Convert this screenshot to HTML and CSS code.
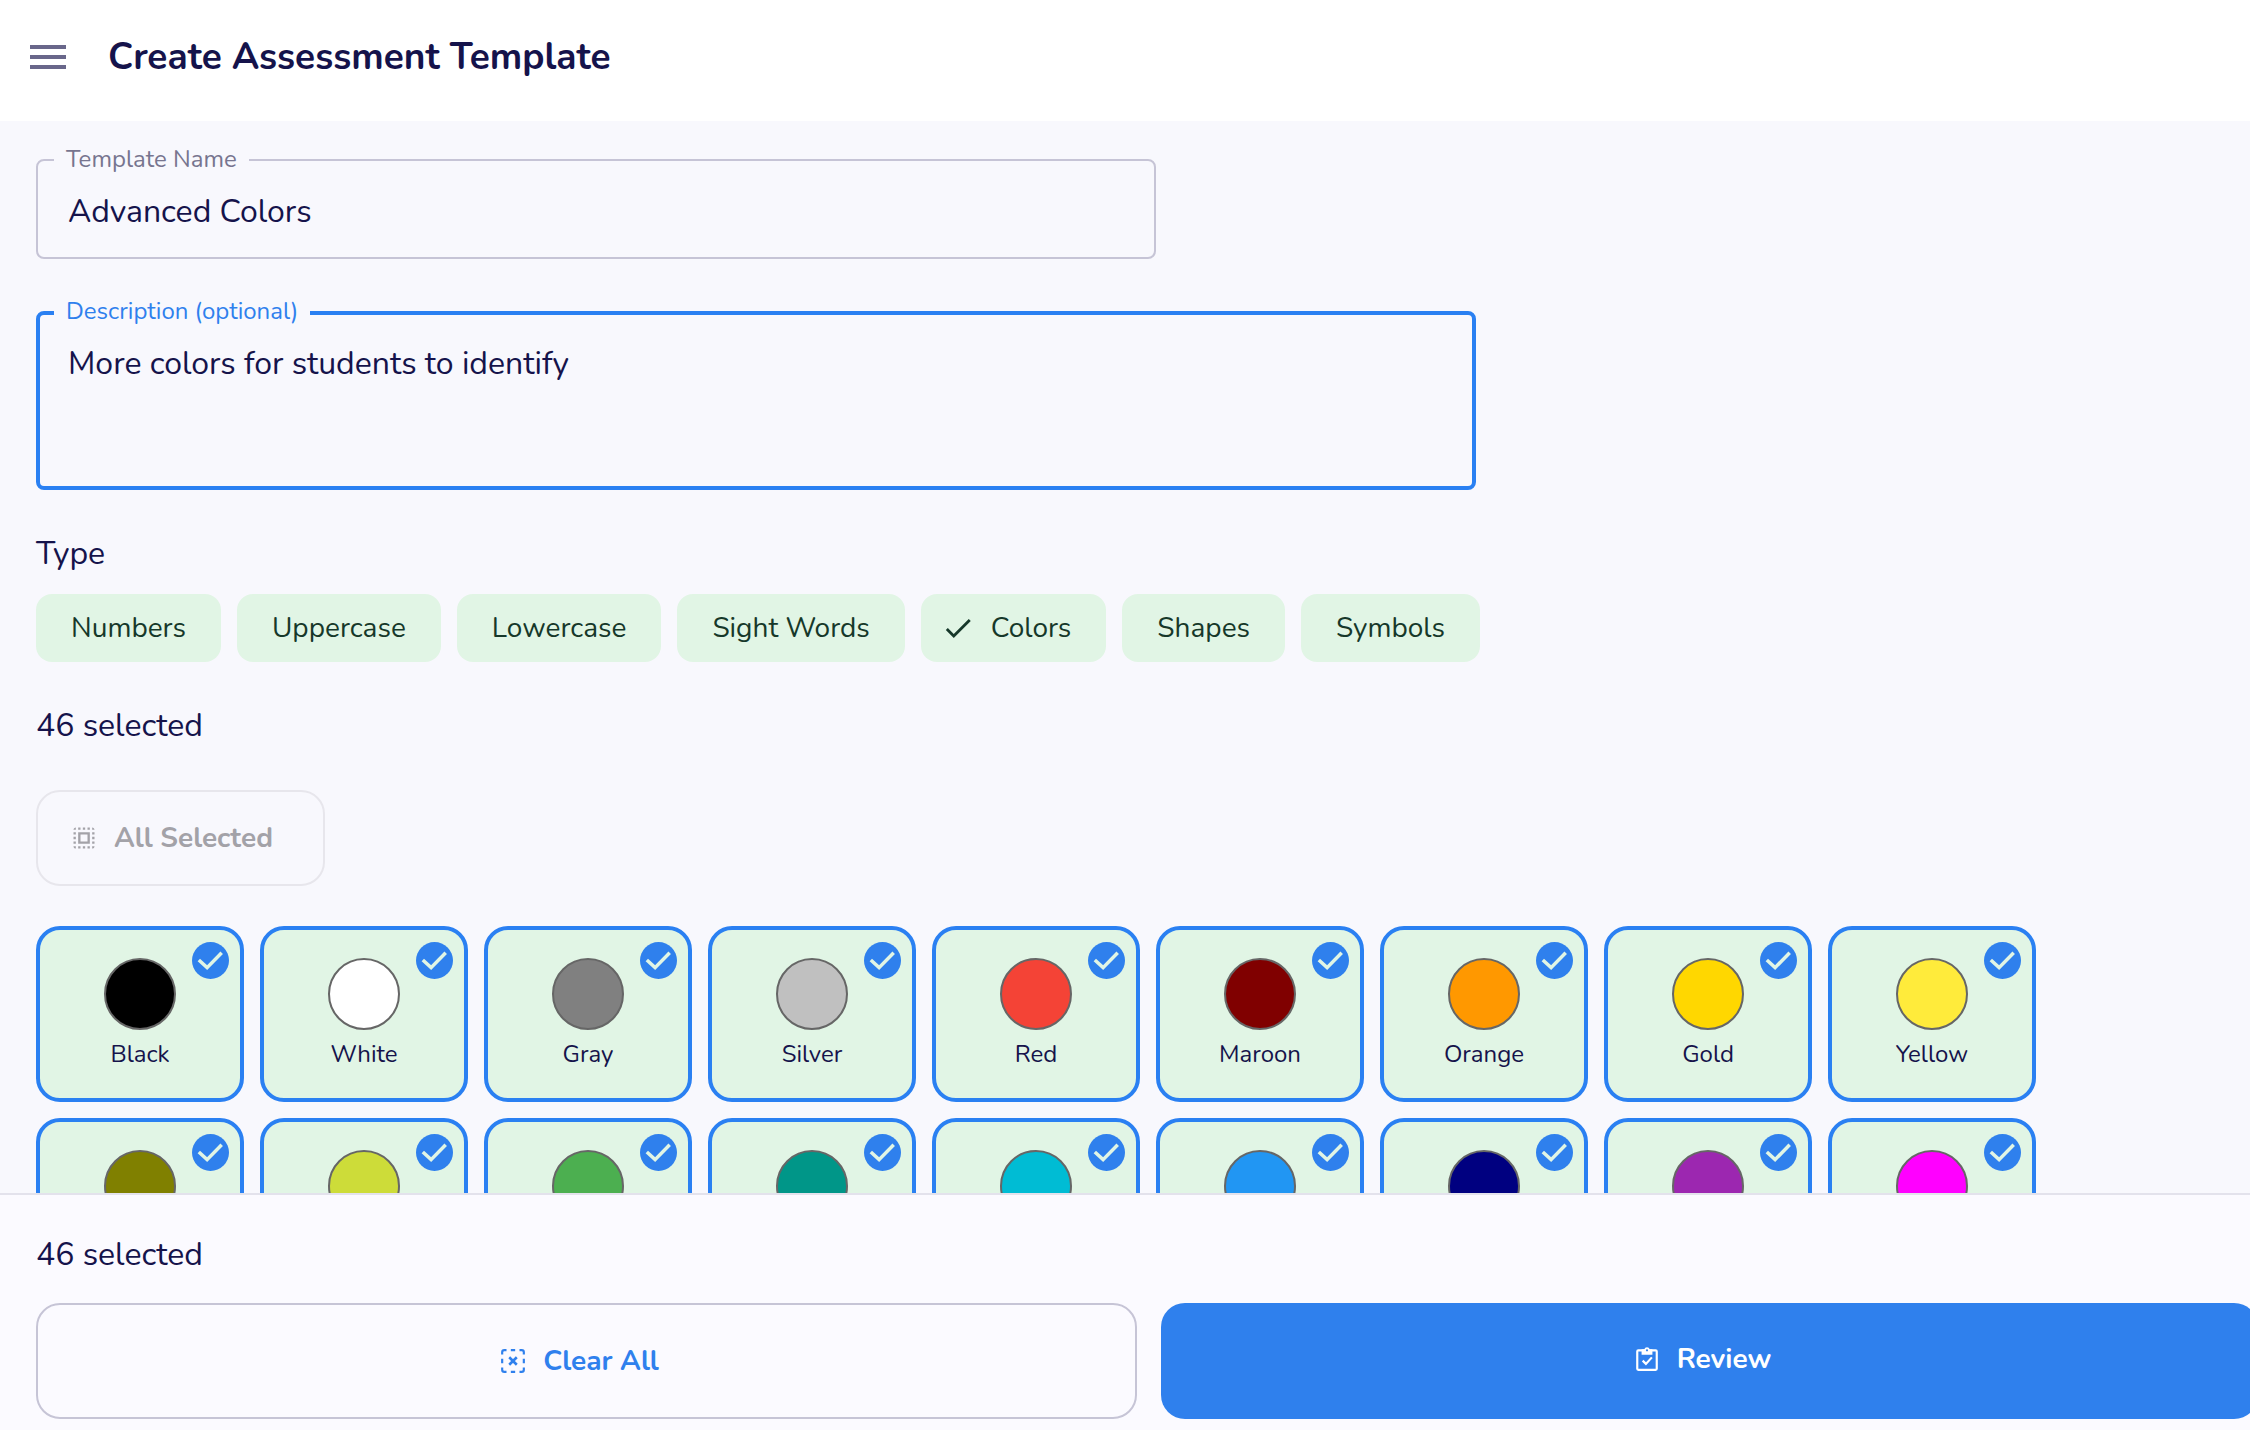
FILE: index.html
```html
<!DOCTYPE html>
<html lang="en">
<head>
<meta charset="utf-8">
<title>Create Assessment Template</title>
<link rel="stylesheet" href="styles.css">
</head>
<body>
<svg class="sprite" aria-hidden="true">
  <symbol id="tick" viewBox="0 0 24 24"><path d="M9 16.17 4.83 12l-1.42 1.41L9 19 21 7l-1.41-1.41z"/></symbol>
  <symbol id="badge" viewBox="0 0 38 38"><circle cx="19" cy="19" r="19" fill="#2f80ed"/><path d="M7 18.500l8.500 7.800L30.500 11" fill="none" stroke="#e1f5e5" stroke-width="3.600"/></symbol>
</svg>

<header class="topbar">
  <button class="menu" type="button" aria-label="Menu"><svg viewBox="0 0 36 24"><path d="M0 0h36v4H0zM0 10h36v4H0zM0 20h36v4H0z"/></svg></button>
  <h1>Create Assessment Template</h1>
</header>

<main class="content">
  <div class="field name">
    <label for="name">Template Name</label>
    <input id="name" type="text" value="Advanced Colors">
  </div>
  <div class="field description">
    <label for="description">Description (optional)</label>
    <textarea id="description">More colors for students to identify</textarea>
  </div>

  <h2>Type</h2>
  <div class="chips">
    <button type="button">Numbers</button>
    <button type="button">Uppercase</button>
    <button type="button">Lowercase</button>
    <button type="button">Sight Words</button>
    <button type="button" class="picked" aria-pressed="true"><svg><use href="#tick"/></svg>Colors</button>
    <button type="button">Shapes</button>
    <button type="button">Symbols</button>
  </div>

  <p class="count">46 selected</p>
  <button class="select-all" type="button" disabled>
    <svg viewBox="0 0 24 24"><path d="M3 5h2V3c-1.100 0-2 .9-2 2zm0 8h2v-2H3v2zm4 8h2v-2H7v2zM3 9h2V7H3v2zm10-6h-2v2h2V3zm6 0v2h2c0-1.100-.9-2-2-2zM5 21v-2H3c0 1.100.9 2 2 2zm-2-4h2v-2H3v2zM9 3H7v2h2V3zm2 18h2v-2h-2v2zm8-8h2v-2h-2v2zm0 8c1.100 0 2-.9 2-2h-2v2zm0-12h2V7h-2v2zm0 8h2v-2h-2v2zm-4 4h2v-2h-2v2zm0-16h2V3h-2v2zM7 17h10V7H7v10zm2-8h6v6H9V9z"/></svg>
    All Selected
  </button>

  <div class="grid">
    <button class="card" type="button"><span class="swatch black"></span>Black<svg class="badge"><use href="#badge"/></svg></button>
    <button class="card" type="button"><span class="swatch white"></span>White<svg class="badge"><use href="#badge"/></svg></button>
    <button class="card" type="button"><span class="swatch gray"></span>Gray<svg class="badge"><use href="#badge"/></svg></button>
    <button class="card" type="button"><span class="swatch silver"></span>Silver<svg class="badge"><use href="#badge"/></svg></button>
    <button class="card" type="button"><span class="swatch red"></span>Red<svg class="badge"><use href="#badge"/></svg></button>
    <button class="card" type="button"><span class="swatch maroon"></span>Maroon<svg class="badge"><use href="#badge"/></svg></button>
    <button class="card" type="button"><span class="swatch orange"></span>Orange<svg class="badge"><use href="#badge"/></svg></button>
    <button class="card" type="button"><span class="swatch gold"></span>Gold<svg class="badge"><use href="#badge"/></svg></button>
    <button class="card" type="button"><span class="swatch yellow"></span>Yellow<svg class="badge"><use href="#badge"/></svg></button>
    <button class="card" type="button" aria-label="Olive"><span class="swatch olive"></span><svg class="badge"><use href="#badge"/></svg></button>
    <button class="card" type="button" aria-label="Lime"><span class="swatch lime"></span><svg class="badge"><use href="#badge"/></svg></button>
    <button class="card" type="button" aria-label="Green"><span class="swatch green"></span><svg class="badge"><use href="#badge"/></svg></button>
    <button class="card" type="button" aria-label="Teal"><span class="swatch teal"></span><svg class="badge"><use href="#badge"/></svg></button>
    <button class="card" type="button" aria-label="Cyan"><span class="swatch cyan"></span><svg class="badge"><use href="#badge"/></svg></button>
    <button class="card" type="button" aria-label="Blue"><span class="swatch blue"></span><svg class="badge"><use href="#badge"/></svg></button>
    <button class="card" type="button" aria-label="Navy"><span class="swatch navy"></span><svg class="badge"><use href="#badge"/></svg></button>
    <button class="card" type="button" aria-label="Purple"><span class="swatch purple"></span><svg class="badge"><use href="#badge"/></svg></button>
    <button class="card" type="button" aria-label="Magenta"><span class="swatch magenta"></span><svg class="badge"><use href="#badge"/></svg></button>
  </div>
</main>

<footer class="footer">
  <p>46 selected</p>
  <div class="actions">
    <button class="clear" type="button">
      <svg viewBox="0 0 24 24" fill="none" stroke="currentColor" stroke-width="2"><path d="M2 6V4q0-2 2-2h2M18 2h2q2 0 2 2v2M22 18v2q0 2-2 2h-2M6 22H4q-2 0-2-2v-2M10 2h4M10 22h4M2 10v4M22 10v4"/><path d="M8.500 8.500l7 7M15.500 8.500l-7 7" stroke-width="2.400"/></svg>
      Clear All
    </button>
    <button class="review" type="button">
      <svg viewBox="0 0 24 24" fill="none" stroke="currentColor" stroke-width="2"><rect x="3" y="4" width="18" height="18" rx="1"/><path d="M8 13.500l3 3 5.500-6"/><path fill="currentColor" stroke="none" d="M7 3h2.500a2.600 2.600 0 0 1 5 0H17v5H7z"/><circle cx="12" cy="4" r="1" fill="#2f80ed" stroke="none"/></svg>
      Review
    </button>
  </div>
</footer>
</body>
</html>
```
FILE: styles.css
```css
* { box-sizing: border-box; }

html, body { height: 100%; }

body {
  margin: 0;
  display: flex;
  flex-direction: column;
  overflow: hidden;
  background: #f8f8fd;
  color: #15134b;
  font: 32px/48px Nunito, Lato, sans-serif;
}

button, input, textarea { font: inherit; color: inherit; }
button { margin: 0; cursor: pointer; }
h1, h2, p { margin: 0; font-size: 32px; font-weight: 400; }
.sprite { position: absolute; width: 0; height: 0; }

.topbar {
  flex: none;
  display: flex;
  align-items: center;
  gap: 42px;
  height: 121px;
  padding: 0 30px 7px;
  background: #fff;
}
.topbar h1 { font-size: 37px; font-weight: 700; }
.menu {
  display: flex;
  padding: 0;
  border: 0;
  background: none;
}
.menu svg { width: 36px; height: 24px; fill: #69678a; }

.content {
  flex: 1;
  min-height: 0;
  overflow: hidden;
  padding: 38px 36px 0;
}

.field { position: relative; }
.field label {
  position: absolute;
  top: -16px;
  left: 18px;
  padding: 0 12px;
  background: #f8f8fd;
  color: #77758f;
  font-size: 24px;
  line-height: 32px;
}
.field input, .field textarea {
  display: block;
  width: 100%;
  border: 2px solid #c6c4d6;
  border-radius: 8px;
  background: none;
  padding: 0 30px;
  outline: 0;
  resize: none;
}
.field input { height: 100px; padding-top: 4px; }
.name { max-width: 1120px; margin-bottom: 52px; }
.description { max-width: 1440px; margin-bottom: 40px; }
.field.description label { color: #2f80ed; }
.field textarea {
  height: 179px;
  border: 4px solid #2a80f2;
  padding: 25px 28px;
}

.chips { display: flex; gap: 16px; margin: 16px 0 40px; }
.chips button {
  display: flex;
  align-items: center;
  gap: 16px;
  height: 68px;
  padding: 0 35px;
  border: 0;
  border-radius: 16px;
  background: #e1f5e5;
  color: #16382a;
  font-size: 28px;
}
.chips .picked { padding-left: 20px; }
.chips svg { width: 34px; height: 34px; fill: currentColor; }

.select-all {
  display: flex;
  align-items: center;
  gap: 16px;
  height: 96px;
  margin: 40px 0;
  padding: 0 50px 0 32px;
  border: 2px solid #e7e6ec;
  border-radius: 24px;
  background: none;
  color: #a3a2a8;
  font-size: 28px;
  font-weight: 700;
}
.select-all svg { width: 28px; height: 28px; fill: currentColor; }

.grid {
  display: grid;
  grid-template-columns: repeat(9, 208px);
  grid-auto-rows: 176px;
  gap: 16px;
}
.card {
  position: relative;
  display: flex;
  flex-direction: column;
  align-items: center;
  gap: 8px;
  padding: 28px 0 0;
  border: 4px solid #2a80f2;
  border-radius: 24px;
  background: #e1f5e5;
  font-size: 24px;
  line-height: 32px;
}
.badge { position: absolute; top: 12px; right: 11px; width: 37px; height: 37px; }
.swatch { width: 72px; height: 72px; border: 2px solid #666; border-radius: 50%; }
.black { background: #000; }
.white { background: #fff; }
.gray { background: #808080; }
.silver { background: #c0c0c0; }
.red { background: #f44336; }
.maroon { background: #800000; }
.orange { background: #ff9800; }
.gold { background: #ffd700; }
.yellow { background: #ffeb3b; }
.olive { background: #808000; }
.lime { background: #cddc39; }
.green { background: #4caf50; }
.teal { background: #009688; }
.cyan { background: #00bcd4; }
.blue { background: #2196f3; }
.navy { background: #000080; }
.purple { background: #9c27b0; }
.magenta { background: #f0f; }

.footer {
  flex: none;
  padding: 36px 0 11px 36px;
  border-top: 2px solid #e3e2ec;
  background: #fbfaff;
}
/* The pair of actions runs slightly past the right edge. */
.actions { display: flex; gap: 24px; margin: 24px -8px 0 0; }
.actions button {
  flex: 1;
  display: flex;
  align-items: center;
  justify-content: center;
  gap: 17px;
  height: 116px;
  padding: 0 14px 0 0;
  border-radius: 24px;
  font-size: 28px;
  font-weight: 700;
}
.actions svg { width: 26px; height: 26px; }
.clear { border: 2px solid #c6c4d6; background: none; color: #2f80ed; }
.actions .review { padding-bottom: 4px; border: 0; background: #2f80ed; color: #fff; }
```
